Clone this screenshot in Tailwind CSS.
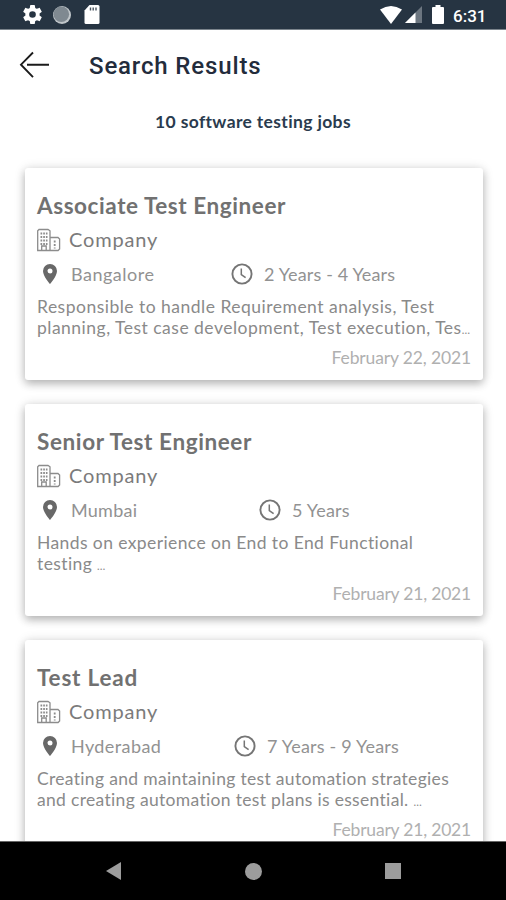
<!DOCTYPE html>
<html lang="en">
<head>
<meta charset="utf-8">
<title>Search Results</title>
<script src="https://cdn.jsdelivr.net/npm/@tailwindcss/browser@4"></script>
</head>
<body class="w-[506px] h-[900px] overflow-hidden bg-white font-[Lato,sans-serif]">
<svg class="hidden">
  <symbol id="building" viewBox="0 0 24 24"><g fill="none" stroke="#8c8c8c" stroke-width="1.3"><path d="M.7 22.500V2.800L2 1.500h9l2 1.300v19.700zM13 9.500h8l1.600 1.500v10l-1.500 1.500H13M4.700 22v-4h4.500v4"/><path d="M3.500 5.500h7M3.500 9h7M3.500 12.500h7M3.500 16h7" stroke-width="1.800" stroke-dasharray="1.700 1"/><path d="M17.700 12.500v8" stroke-width="1.800" stroke-dasharray="2 1.500"/></g></symbol>
  <symbol id="pin" viewBox="0 0 14 20"><path fill="#686868" fill-rule="evenodd" d="M7 0a7 7 0 0 0-7 7c0 5.200 7 13 7 13s7-7.800 7-13a7 7 0 0 0-7-7zm0 4.500a2.500 2.500 0 1 1 0 5 2.500 2.500 0 0 1 0-5z"/></symbol>
  <symbol id="clock" viewBox="0 0 22 22"><g fill="none" stroke="#757575"><circle cx="11" cy="11" r="9.600" stroke-width="1.900"/><path d="M10.300 5.500v6l4.300 3.200" stroke-width="1.500"/></g></symbol>
</svg>
<div class="flex h-full flex-col">
  <header class="flex h-[30px] shrink-0 items-center border-b border-[#7b848c] bg-[#263442] pl-[23px] pr-[20px]">
    <svg class="h-[19px] w-[19px]" viewBox="2 2 20 20"><path fill="#fff" d="M19.430 12.980c.04-.32.07-.64.07-.98s-.03-.66-.07-.98l2.110-1.650c.19-.15.24-.42.12-.64l-2-3.460c-.12-.22-.39-.3-.61-.22l-2.490 1c-.52-.4-1.080-.73-1.690-.98l-.38-2.650A.49.490 0 0 0 14 2h-4a.49.490 0 0 0-.49.420l-.38 2.650c-.61.25-1.170.59-1.690.98l-2.490-1c-.23-.09-.49 0-.61.22l-2 3.460c-.13.22-.07.49.12.64l2.110 1.650c-.04.32-.07.65-.07.98s.03.66.07.98l-2.110 1.650c-.19.15-.24.42-.12.64l2 3.460c.12.22.39.3.61.22l2.490-1c.52.4 1.080.73 1.690.98l.38 2.650c.03.24.24.42.49.420h4c.25 0 .46-.18.49-.42l.38-2.650c.61-.25 1.170-.59 1.690-.98l2.490 1c.23.09.49 0 .61-.22l2-3.460c.12-.22.07-.49-.12-.64zM12 15.500a3.500 3.500 0 1 1 0-7 3.500 3.500 0 0 1 0 7z"/></svg>
    <svg class="ml-[11px] h-[18px] w-[18px]" viewBox="0 0 18 18"><circle cx="9" cy="9" r="9" fill="#c0c6ca"/><circle cx="8.300" cy="8.300" r="7.800" fill="#7f8991"/></svg>
    <svg class="ml-[13px] h-[19px] w-[16px]" viewBox="0 0 16 19"><path fill="#fff" d="M5.500 0H14q1.500 0 1.500 1.500v16Q15.500 19 14 19H2Q.5 19 .5 17.500V5.500z"/><path d="M6.500 2.500v3M9.200 2.500v3M12 2.500v3" stroke="#4b5660" stroke-width="1.400"/></svg>
    <svg class="ml-auto h-[18px] w-[22px]" viewBox="0 0 22 18"><path fill="#fff" d="M0 3.500Q11-3.500 22 3.500L11 18z"/></svg>
    <svg class="ml-[3px] h-[17px] w-[17px]" viewBox="0 0 17 17"><path fill="#6c7680" d="M17 0v17H0z"/><path fill="#fff" d="M10.500 6.500V17H0z"/></svg>
    <svg class="ml-[10px] h-[19px] w-[12px]" viewBox="0 0 12 19"><path fill="#fff" d="M3.500 0h5v2H11q1 0 1 1v15q0 1-1 1H1q-1 0-1-1V3q0-1 1-1h2.500z"/></svg>
    <span class="ml-[9px] w-[33px] whitespace-nowrap pt-[2px] font-[Roboto,sans-serif] text-[17px] font-medium leading-5 text-white">6:31</span>
  </header>
  <main class="flex min-h-0 flex-1 flex-col overflow-hidden">
    <div class="flex h-[70px] shrink-0 items-center pl-[19px]">
      <svg class="h-[28px] w-[31px]" viewBox="0 0 31 28"><path d="M14 1.500L2 13.700l12 12.500M8 13.700h22" fill="none" stroke="#1b1b1b" stroke-width="1.900"/></svg>
      <h1 class="ml-[39px] whitespace-nowrap pt-px font-[Roboto,sans-serif] text-[24px] font-medium tracking-[0.85px] text-[#232c3c]">Search Results</h1>
    </div>
    <p class="h-[68px] shrink-0 whitespace-nowrap pt-[10px] text-center text-[17.500px] leading-6 font-bold tracking-[0.35px] text-[#2a3b4e]">10 software testing jobs</p>
    <div class="flex shrink-0 flex-col gap-[24px] px-[25px] text-[#7b7b7b]">
      <article class="h-[212px] w-[458px] shrink-0 rounded-[3px] bg-white px-[12px] pt-[25px] shadow-[0_4px_8px_rgba(0,0,0,0.22),0_1px_12px_rgba(0,0,0,0.14)]">
        <h2 class="h-[33px] whitespace-nowrap text-[22.500px] leading-[26px] font-bold tracking-[0.57px] text-[#717171]">Associate Test Engineer</h2>
        <div class="flex h-[28px] items-center"><svg class="h-6 w-6"><use href="#building"/></svg><span class="ml-[8px] pb-[2px] text-[20px] leading-6 tracking-[0.85px]">Company</span></div>
        <div class="flex h-10 items-center"><svg class="ml-[6px] h-5 w-[14px]"><use href="#pin"/></svg><span class="ml-[14px] w-[160px] text-[18px] tracking-[0.5px] text-[#929292]">Bangalore</span><svg class="h-[22px] w-[22px]"><use href="#clock"/></svg><span class="ml-[11px] whitespace-nowrap text-[18px] tracking-[0.15px] text-[#929292]">2 Years - 4 Years</span></div>
        <p class="mt-[3px] whitespace-nowrap text-[17.5px] leading-[20.5px] tracking-[0.49px] text-[#8a8a8a]">Responsible to handle Requirement analysis, Test<br>planning, Test case development, Test execution, Tes<span class="tracking-normal text-[11px]">…</span></p>
        <time class="mt-[7px] block text-right text-[17.5px] leading-[22px] tracking-[-0.14px] text-[#b0b0b0]">February 22, 2021</time>
      </article>
      <article class="h-[212px] w-[458px] shrink-0 rounded-[3px] bg-white px-[12px] pt-[25px] shadow-[0_4px_8px_rgba(0,0,0,0.22),0_1px_12px_rgba(0,0,0,0.14)]">
        <h2 class="h-[33px] whitespace-nowrap text-[22.500px] leading-[26px] font-bold tracking-[0.6px] text-[#717171]">Senior Test Engineer</h2>
        <div class="flex h-[28px] items-center"><svg class="h-6 w-6"><use href="#building"/></svg><span class="ml-[8px] pb-[2px] text-[20px] leading-6 tracking-[0.85px]">Company</span></div>
        <div class="flex h-10 items-center"><svg class="ml-[6px] h-5 w-[14px]"><use href="#pin"/></svg><span class="ml-[14px] w-[188px] text-[18px] tracking-[0.25px] text-[#929292]">Mumbai</span><svg class="h-[22px] w-[22px]"><use href="#clock"/></svg><span class="ml-[11px] whitespace-nowrap text-[18px] tracking-[0.2px] text-[#929292]">5 Years</span></div>
        <p class="mt-[3px] whitespace-nowrap text-[17.5px] leading-[20.5px] tracking-[0.4px] text-[#8a8a8a]">Hands on experience on End to End Functional<br>testing <span class="tracking-normal text-[11px]">…</span></p>
        <time class="mt-[7px] block text-right text-[17.5px] leading-[22px] tracking-[-0.2px] text-[#b0b0b0]">February 21, 2021</time>
      </article>
      <article class="h-[212px] w-[458px] shrink-0 rounded-[3px] bg-white px-[12px] pt-[25px] shadow-[0_4px_8px_rgba(0,0,0,0.22),0_1px_12px_rgba(0,0,0,0.14)]">
        <h2 class="h-[33px] whitespace-nowrap text-[22.500px] leading-[26px] font-bold tracking-[0.8px] text-[#717171]">Test Lead</h2>
        <div class="flex h-[28px] items-center"><svg class="h-6 w-6"><use href="#building"/></svg><span class="ml-[8px] pb-[2px] text-[20px] leading-6 tracking-[0.85px]">Company</span></div>
        <div class="flex h-10 items-center"><svg class="ml-[6px] h-5 w-[14px]"><use href="#pin"/></svg><span class="ml-[14px] w-[163px] text-[18px] tracking-[0.4px] text-[#929292]">Hyderabad</span><svg class="h-[22px] w-[22px]"><use href="#clock"/></svg><span class="ml-[11px] whitespace-nowrap text-[18px] tracking-[0.2px] text-[#929292]">7 Years - 9 Years</span></div>
        <p class="mt-[3px] whitespace-nowrap text-[17.5px] leading-[20.5px] tracking-[0.32px] text-[#8a8a8a]">Creating and maintaining test automation strategies<br>and creating automation test plans is essential. <span class="tracking-normal text-[11px]">…</span></p>
        <time class="mt-[7px] block text-right text-[17.5px] leading-[22px] tracking-[-0.2px] text-[#b0b0b0]">February 21, 2021</time>
      </article>
    </div>
  </main>
  <nav class="flex h-[59px] shrink-0 items-center border-t border-[#666] bg-black pl-[106px]">
    <svg class="h-[18px] w-[15px]" viewBox="0 0 15 18"><path d="M15 0v18L0 9z" fill="#9c9c9c"/></svg>
    <div class="ml-[124px] h-[17px] w-[17px] rounded-full bg-[#9c9c9c]"></div>
    <div class="ml-[123px] h-4 w-4 bg-[#9c9c9c]"></div>
  </nav>
</div>
</body>
</html>
